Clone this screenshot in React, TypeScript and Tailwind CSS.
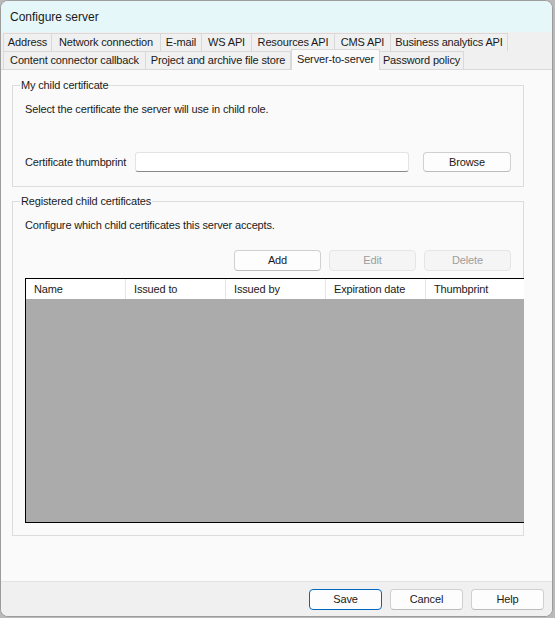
import type { ReactNode } from "react";

const TAB_ROW_ONE = [
  { label: "Address", width: "w-[49px]" },
  { label: "Network connection", width: "w-[109px]" },
  { label: "E-mail", width: "w-[41px]" },
  { label: "WS API", width: "w-[50px]" },
  { label: "Resources API", width: "w-[83px]" },
  { label: "CMS API", width: "w-[56px]" },
  { label: "Business analytics API", width: "w-[117px]" },
];

const TAB_ROW_TWO = [
  { label: "Content connector callback", width: "w-[143px]" },
  { label: "Project and archive file store", width: "w-[145px]" },
  { label: "Server-to-server", width: "w-[89px]", active: true },
  { label: "Password policy", width: "w-[84px]" },
];

const COLUMNS = ["Name", "Issued to", "Issued by", "Expiration date", "Thumbprint"];

function Tab({
  label,
  width,
  active = false,
}: {
  label: string;
  width: string;
  active?: boolean;
}) {
  if (active) {
    return (
      <div
        className={`${width} relative z-10 -mt-[2px] -mb-[1px] flex h-[21px] items-start justify-center border border-b-0 border-[#d9d9d9] bg-[#fafafa] pt-[1px]`}
      >
        {label}
      </div>
    );
  }
  return (
    <div
      className={`${width} flex h-[18px] items-center justify-center border-r border-t border-[#d9d9d9] bg-[#f0f0f0] first:border-l`}
    >
      {label}
    </div>
  );
}

function GroupBox({
  title,
  className,
  children,
}: {
  title: string;
  className: string;
  children: ReactNode;
}) {
  return (
    <div
      className={`relative ml-[11px] w-[512px] border border-[#dcdcdc] ${className}`}
    >
      <span className="absolute -top-[9px] left-[7px] bg-[#fafafa] px-[1px] leading-[16px]">
        {title}
      </span>
      {children}
    </div>
  );
}

function Button({
  children,
  width = "w-[87px]",
  disabled = false,
  primary = false,
  height = "h-[21px]",
}: {
  children: ReactNode;
  width?: string;
  disabled?: boolean;
  primary?: boolean;
  height?: string;
}) {
  const tone = disabled
    ? "border-[#e5e5e5] bg-[#f5f5f5] text-[#9d9d9d]"
    : primary
      ? "border-[#0067c0] bg-[#fdfdfd] text-[#1a1a1a]"
      : "border-[#d0d0d0] border-b-[#bcbcbc] bg-[#fdfdfd] text-[#1a1a1a]";
  return (
    <div
      className={`${width} ${height} flex items-center justify-center rounded-[4px] border ${tone}`}
    >
      {children}
    </div>
  );
}

export default function App() {
  return (
    <div className="h-[618px] w-[555px] overflow-hidden bg-[#b9b9b9] font-['Liberation_Sans',Arial,sans-serif] text-[11px] tracking-[-0.15px] text-[#1a1a1a]">
      <div className="flex h-[617px] w-[553px] flex-col overflow-hidden rounded-[8px] border border-[#9c9c9c] bg-[#f0f0f0]">
        <div className="flex h-[31px] items-center bg-[#e6f7f9] pl-[9px] text-[12px] tracking-normal">
          Configure server
        </div>

        <div className="flex flex-col px-[2px] pt-[1px]">
          <div className="flex">
            {TAB_ROW_ONE.map((tab) => (
              <Tab key={tab.label} {...tab} />
            ))}
          </div>
          <div className="flex">
            {TAB_ROW_TWO.map((tab) => (
              <Tab key={tab.label} {...tab} />
            ))}
          </div>
        </div>

        <div className="flex-1 border-t border-[#d9d9d9] bg-[#fafafa]">
          <div className="w-[523px] overflow-hidden pt-[15px]">
            <GroupBox title="My child certificate" className="pb-[14px] pl-[12px] pt-[15px]">
              <p className="leading-[16px]">
                Select the certificate the server will use in child role.
              </p>
              <div className="mt-[35px] flex items-center">
                <span className="w-[110px]">Certificate thumbprint</span>
                <div className="h-[20px] w-[274px] rounded-[3px] border border-[#e3e3e3] border-b-[#8a8a8a] bg-white" />
                <div className="ml-[14px]">
                  <Button width="w-[88px]" height="h-[20px]">Browse</Button>
                </div>
              </div>
            </GroupBox>

            <GroupBox
              title="Registered child certificates"
              className="mt-[14px] pb-[12px] pl-[12px] pt-[15px]"
            >
              <p className="leading-[16px]">
                Configure which child certificates this server accepts.
              </p>
              <div className="mt-[17px] flex justify-end gap-[8px] pr-[12px]">
                <Button>Add</Button>
                <Button disabled>Edit</Button>
                <Button disabled>Delete</Button>
              </div>
              <div className="mt-[7px] flex h-[245px] w-[540px] flex-col border border-black bg-[#ababab]">
                <div className="flex h-[20px] bg-white">
                  {COLUMNS.map((column) => (
                    <div
                      key={column}
                      className="flex w-[100px] shrink-0 items-center border-r border-[#e5e5e5] pl-[8px]"
                    >
                      {column}
                    </div>
                  ))}
                </div>
              </div>
            </GroupBox>
          </div>
        </div>

        <div className="flex h-[35px] items-center justify-end gap-[8px] border-t border-[#e3e3e3] bg-[#f0f0f0] pr-[8px]">
          <Button width="w-[73px]" primary>
            Save
          </Button>
          <Button width="w-[73px]">Cancel</Button>
          <Button width="w-[73px]">Help</Button>
        </div>
      </div>
    </div>
  );
}
